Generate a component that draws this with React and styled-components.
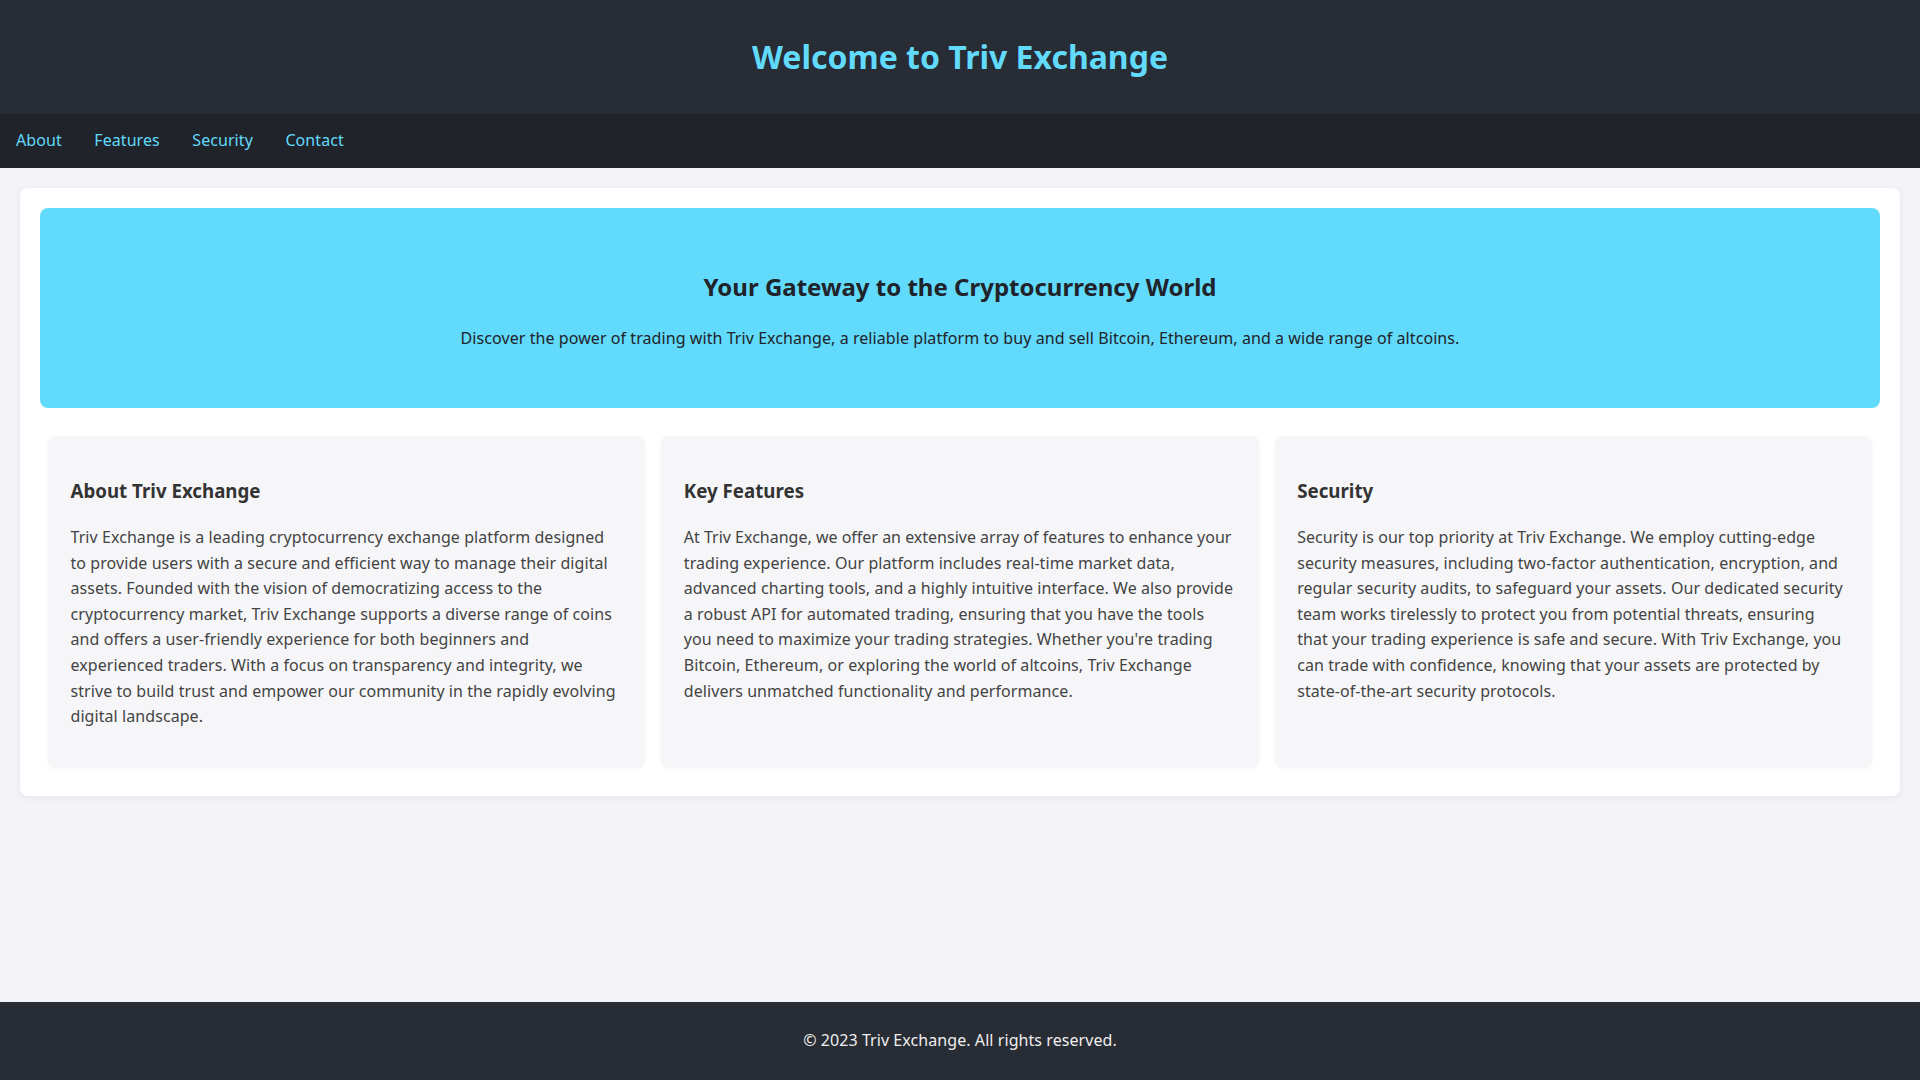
import React from "react";
import styled, { createGlobalStyle } from "styled-components";

const GlobalStyle = createGlobalStyle`
  * { box-sizing: border-box; }
  html, body {
    margin: 0;
    padding: 0;
  }
  body {
    font-family: "Noto Sans", "Open Sans", Arial, sans-serif;
    font-size: 16px;
    line-height: 1.6;
    letter-spacing: 0.07px;
    background: #f4f4f8;
    color: #333;
  }
  h1, h2, h3 { letter-spacing: normal; }
`;

const Page = styled.div`
  min-height: 100vh;
  display: flex;
  flex-direction: column;
`;

const Header = styled.header`
  background: #282c34;
  padding: 10px 0;
  text-align: center;
`;

const Title = styled.h1`
  margin: 21.44px 0;
  font-size: 32px;
  font-weight: 700;
  color: #61dafb;
`;

const Nav = styled.nav`
  background: #20232a;
  display: flex;
  gap: 32.5px;
  padding: 14px 16px;
`;

const NavLink = styled.a`
  color: #61dafb;
  text-decoration: none;
  font-size: 16px;
  &:hover { text-decoration: underline; }
`;

const Main = styled.main`
  flex: 1;
`;

const Container = styled.div`
  margin: 20px;
  padding: 20px;
  background: #fff;
  border-radius: 8px;
  box-shadow: 0 2px 8px rgba(0, 0, 0, 0.06);
`;

const Hero = styled.section`
  background: #61dafb;
  border-radius: 8px;
  padding: 40px;
  margin-bottom: 20px;
  text-align: center;
  color: #20232a;

  h2 {
    margin: 20px 0;
    font-size: 24px;
    font-weight: 700;
  }
  p {
    margin: 16px 0;
  }
`;

const Cards = styled.div`
  display: flex;
`;

const Card = styled.article`
  flex: 1;
  margin: 8px;
  padding: 22px 22.5px;
  background: #f6f6f8;
  border-radius: 8px;
  box-shadow: 0 1px 4px rgba(0, 0, 0, 0.04);

  h3 {
    margin: 18.72px 0;
    font-size: 18.72px;
    font-weight: 700;
    color: #333;
  }
  p {
    margin: 16px 0;
    color: #444;
  }
  p::first-line {
    letter-spacing: ${(p) => (p.$snug ? "0" : "0.07px")};
  }
`;

const Footer = styled.footer`
  background: #282c34;
  color: #eee;
  text-align: center;
  padding: 26px 0;

  p { margin: 0; }
`;

const sections = [
  {
    id: "about",
    title: "About Triv Exchange",
    text: "Triv Exchange is a leading cryptocurrency exchange platform designed to provide users with a secure and efficient way to manage their digital assets. Founded with the vision of democratizing access to the cryptocurrency market, Triv Exchange supports a diverse range of coins and offers a user-friendly experience for both beginners and experienced traders. With a focus on transparency and integrity, we strive to build trust and empower our community in the rapidly evolving digital landscape.",
  },
  {
    id: "features",
    title: "Key Features",
    snug: true,
    text: "At Triv Exchange, we offer an extensive array of features to enhance your trading experience. Our platform includes real-time market data, advanced charting tools, and a highly intuitive interface. We also provide a robust API for automated trading, ensuring that you have the tools you need to maximize your trading strategies. Whether you're trading Bitcoin, Ethereum, or exploring the world of altcoins, Triv Exchange delivers unmatched functionality and performance.",
  },
  {
    id: "security",
    title: "Security",
    text: "Security is our top priority at Triv Exchange. We employ cutting-edge security measures, including two-factor authentication, encryption, and regular security audits, to safeguard your assets. Our dedicated security team works tirelessly to protect you from potential threats, ensuring that your trading experience is safe and secure. With Triv Exchange, you can trade with confidence, knowing that your assets are protected by state-of-the-art security protocols.",
  },
];

export default function App() {
  return (
    <Page>
      <GlobalStyle />
      <Header>
        <Title>Welcome to Triv Exchange</Title>
      </Header>
      <Nav>
        <NavLink href="#about">About</NavLink>
        <NavLink href="#features">Features</NavLink>
        <NavLink href="#security">Security</NavLink>
        <NavLink href="#contact">Contact</NavLink>
      </Nav>
      <Main>
        <Container>
          <Hero>
            <h2>Your Gateway to the Cryptocurrency World</h2>
            <p>
              Discover the power of trading with Triv Exchange, a reliable platform to buy and sell Bitcoin, Ethereum, and a wide range of altcoins.
            </p>
          </Hero>
          <Cards>
            {sections.map((s) => (
              <Card key={s.id} id={s.id} $snug={s.snug}>
                <h3>{s.title}</h3>
                <p>{s.text}</p>
              </Card>
            ))}
          </Cards>
        </Container>
      </Main>
      <Footer id="contact">
        <p>&copy; 2023 Triv Exchange. All rights reserved.</p>
      </Footer>
    </Page>
  );
}
